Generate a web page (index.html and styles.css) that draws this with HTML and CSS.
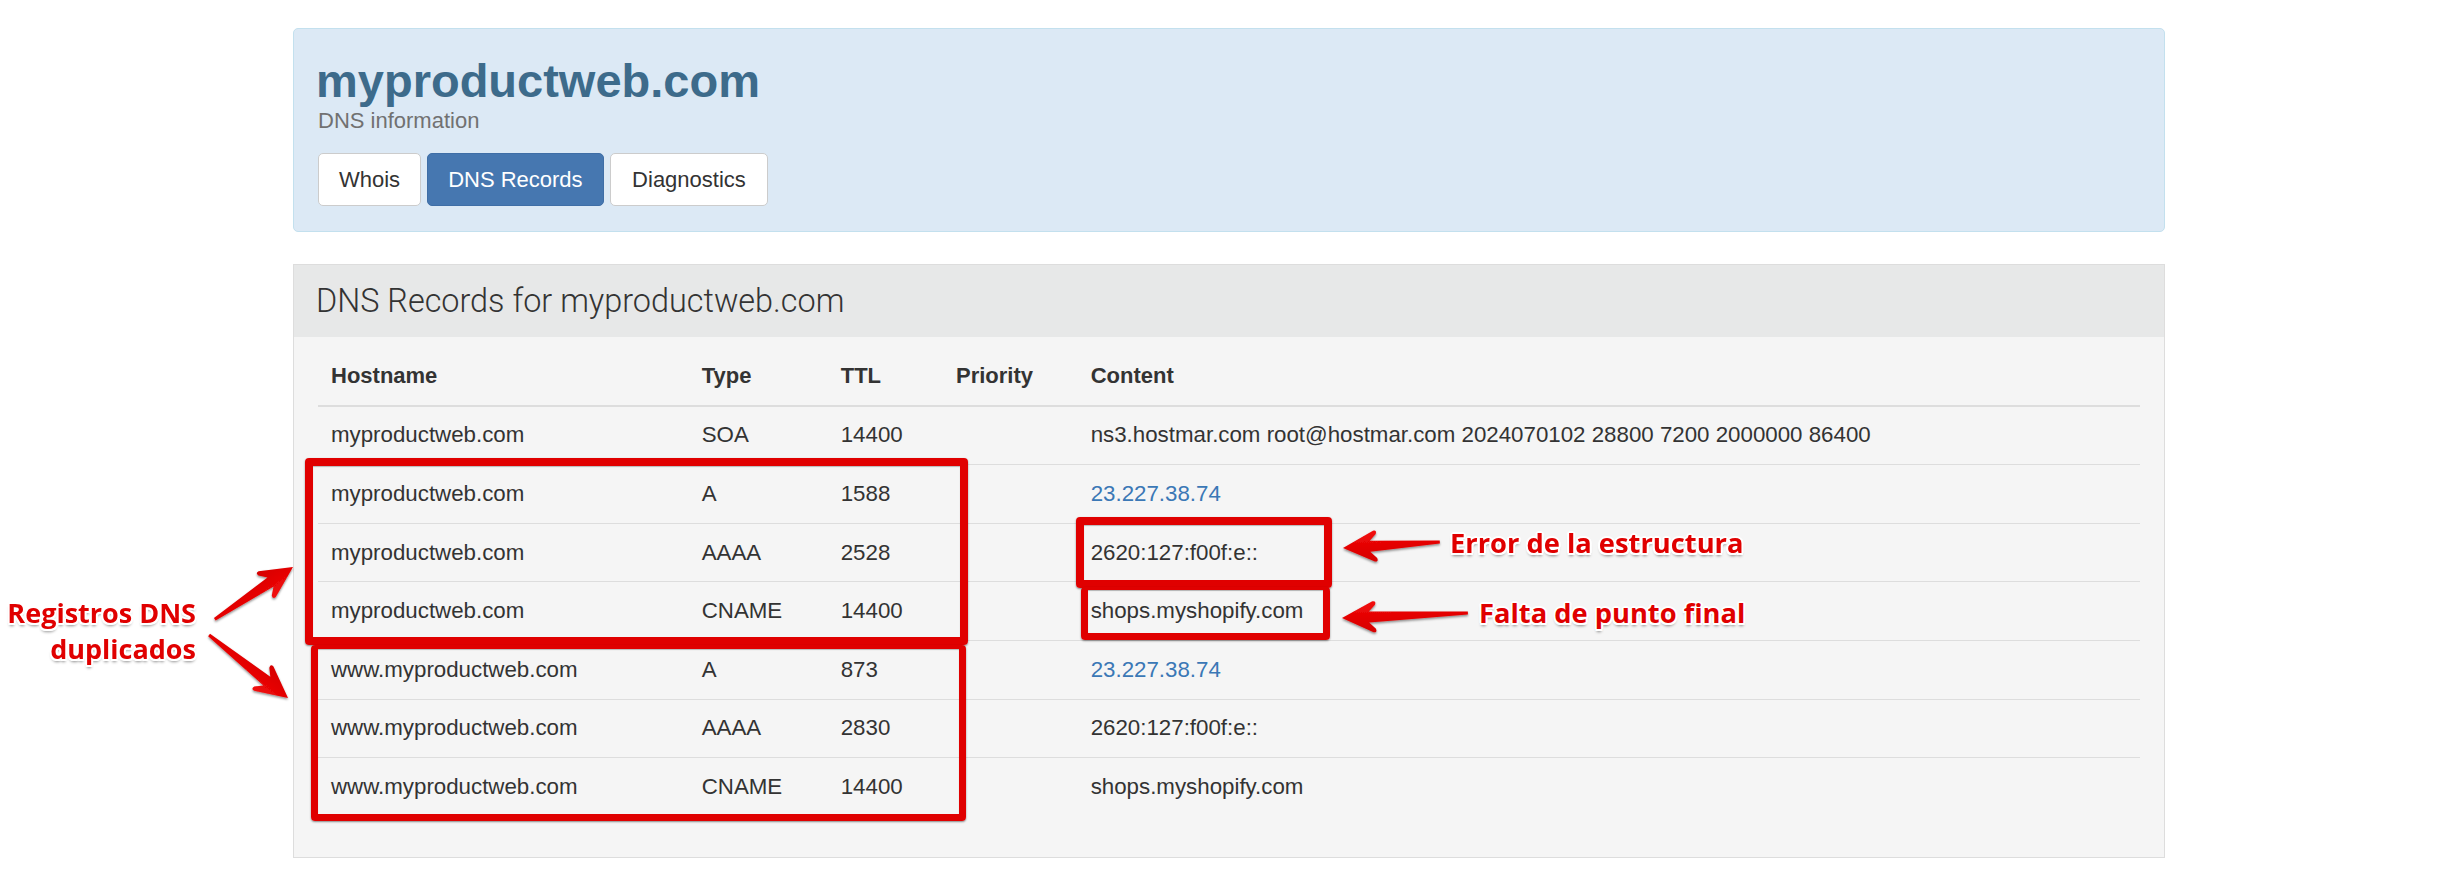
FILE: index.html
```html
<!DOCTYPE html>
<html lang="es">
<head>
<meta charset="utf-8">
<title>myproductweb.com - DNS Records</title>
<link rel="stylesheet" href="styles.css">
</head>
<body>
<div class="page">
  <div class="container">
    <div class="hero">
      <h1 class="hero-title">myproductweb.com</h1>
      <p class="hero-sub">DNS information</p>
      <div class="tabs">
        <a class="btn">Whois</a>
        <a class="btn btn-active">DNS Records</a>
        <a class="btn btn-wide">Diagnostics</a>
      </div>
    </div>

    <div class="panel">
      <div class="panel-heading">
        <h3 class="panel-title">DNS Records for myproductweb.com</h3>
      </div>
      <div class="panel-body">
        <table class="records">
          <colgroup>
            <col class="c-host"><col class="c-type"><col class="c-ttl"><col class="c-prio"><col class="c-content">
          </colgroup>
          <thead>
            <tr><th>Hostname</th><th>Type</th><th>TTL</th><th>Priority</th><th>Content</th></tr>
          </thead>
          <tbody>
            <tr><td>myproductweb.com</td><td>SOA</td><td>14400</td><td></td><td>ns3.hostmar.com root@hostmar.com 2024070102 28800 7200 2000000 86400</td></tr>
            <tr><td>myproductweb.com</td><td>A</td><td>1588</td><td></td><td><a class="link">23.227.38.74</a></td></tr>
            <tr><td>myproductweb.com</td><td>AAAA</td><td>2528</td><td></td><td>2620:127:f00f:e::</td></tr>
            <tr><td>myproductweb.com</td><td>CNAME</td><td>14400</td><td></td><td>shops.myshopify.com</td></tr>
            <tr><td>www.myproductweb.com</td><td>A</td><td>873</td><td></td><td><a class="link">23.227.38.74</a></td></tr>
            <tr><td>www.myproductweb.com</td><td>AAAA</td><td>2830</td><td></td><td>2620:127:f00f:e::</td></tr>
            <tr><td>www.myproductweb.com</td><td>CNAME</td><td>14400</td><td></td><td>shops.myshopify.com</td></tr>
          </tbody>
        </table>
      </div>
    </div>
  </div>

  <!-- annotation overlay -->
  <div class="mark mark-1"></div>
  <div class="mark mark-2"></div>
  <div class="mark mark-3"></div>
  <div class="mark mark-4"></div>

  <svg class="arrows" width="2448" height="878" viewBox="0 0 2448 878" xmlns="http://www.w3.org/2000/svg">
    <defs>
      <filter id="ash" x="-20%" y="-20%" width="140%" height="140%">
        <feDropShadow dx="0" dy="1.5" stdDeviation="1" flood-color="#000" flood-opacity="0.45"/>
      </filter>
      <linearGradient id="ared" x1="0" y1="0" x2="0" y2="1">
        <stop offset="0" stop-color="#f20a0a"/>
        <stop offset="1" stop-color="#d60000"/>
      </linearGradient>
    </defs>
    <g fill="url(#ared)" filter="url(#ash)">
      <path transform="translate(1343 548) rotate(-3.5)" d="M0,0 L31,-15.5 Q35,-16 33.5,-12 L27,-5.5 L97,-1.5 L97,1.5 L27,5.5 L33.5,12 Q35,16 31,15.5 Z"/>
      <path transform="translate(1342 618) rotate(-2.3)" d="M0,0 L31,-15.5 Q35,-16 33.5,-12 L27,-5.5 L126,-1.5 L126,1.5 L27,5.5 L33.5,12 Q35,16 31,15.5 Z"/>
      <path transform="translate(293 567) rotate(146.3)" d="M0,0 L31,-15.5 Q35,-16 33.5,-12 L27,-5.5 L94,-1.5 L94,1.5 L27,5.5 L33.5,12 Q35,16 31,15.5 Z"/>
      <path transform="translate(288 698) rotate(-141.4)" d="M0,0 L31,-15.5 Q35,-16 33.5,-12 L27,-5.5 L101,-1.5 L101,1.5 L27,5.5 L33.5,12 Q35,16 31,15.5 Z"/>
    </g>
  </svg>

  <div class="note note-left">Registros DNS<br>duplicados</div>
  <div class="note note-err">Error de la estructura</div>
  <div class="note note-dot">Falta de punto final</div>
</div>
</body>
</html>
```

FILE: styles.css
```css
* { box-sizing: border-box; }

html, body {
  margin: 0;
  padding: 0;
  background: #ffffff;
}

body {
  font-family: "Liberation Sans", Helvetica, Arial, sans-serif;
  font-size: 22px;
  line-height: 32px;
  color: #333333;
}

.page {
  position: relative;
  width: 2448px;
  height: 878px;
  overflow: hidden;
}

.container {
  width: 1872px;
  margin-left: 293px;
  padding-top: 28px;
}

/* ---------- header box ---------- */
.hero {
  height: 204px;
  background: #dce9f5;
  border: 1px solid #c3e0ee;
  border-radius: 5px;
  padding: 25.5px 24px 0 24px;
}

.hero-title {
  margin: 0 0 0 -2px;
  font-size: 47px;
  line-height: 52px;
  font-weight: 700;
  color: #3d6b8b;
}

.hero-sub {
  margin: 1px 0 0 0;
  font-size: 22px;
  line-height: 26px;
  color: #717171;
}

.tabs {
  display: flex;
  gap: 6px;
  margin-top: 19px;
}

.btn {
  display: block;
  height: 53px;
  padding: 0 20px;
  line-height: 51px;
  font-size: 22px;
  color: #333333;
  background: #ffffff;
  border: 1px solid #cccccc;
  border-radius: 5px;
}

.btn-wide {
  padding: 0 21.5px;
}

.btn-active {
  color: #ffffff;
  background: #4677b0;
  border-color: #3f6ea6;
}

/* ---------- panel ---------- */
.panel {
  margin-top: 32px;
  height: 594px;
  background: #f5f5f5;
  border: 1px solid #dddddd;
}

.panel-heading {
  height: 72px;
  background: #e7e8e8;
  padding: 19px 24px 0 22px;
}

.panel-title {
  margin: 0;
  font-family: "Roboto", "Liberation Sans", Helvetica, Arial, sans-serif;
  font-weight: 300;
  font-size: 32.4px;
  line-height: 35px;
  color: #333333;
}

.panel-body {
  padding: 10px 24px 40px 24px;
}

.records {
  width: 100%;
  table-layout: fixed;
  border-collapse: collapse;
  border-spacing: 0;
  font-size: 22.3px;
}

.c-host { width: 370.7px; }
.c-type { width: 139px; }
.c-ttl { width: 115.3px; }
.c-prio { width: 134.7px; }

.records th {
  text-align: left;
  font-weight: 700;
  font-size: 22px;
  padding: 12.8px 13px;
  vertical-align: bottom;
  border-bottom: 2px solid #dddddd;
  white-space: nowrap;
}

.records td {
  padding: 12.8px 13px;
  border-top: 1px solid #dddddd;
  vertical-align: top;
  white-space: nowrap;
}

.link {
  color: #3b78b6;
  text-decoration: none;
}

/* ---------- annotations (overlay) ---------- */
.mark {
  position: absolute;
  border: 8px solid #e00000;
  border-radius: 4px;
  box-shadow: 0 1px 2px rgba(0, 0, 0, 0.45), inset 0 1px 1px rgba(0, 0, 0, 0.25);
}

.mark-1 { left: 305px; top: 458px; width: 663px; height: 187px; }
.mark-2 { left: 311px; top: 645px; width: 655px; height: 176px; border-width: 4px 7px 7px 7px; }
.mark-3 { left: 1076px; top: 517px; width: 256px; height: 71px; }
.mark-4 { left: 1081px; top: 587px; width: 249px; height: 53px; border-width: 3px 7px 7px 7px; }

.arrows {
  position: absolute;
  left: 0;
  top: 0;
  pointer-events: none;
}

.note {
  position: absolute;
  font-family: "Open Sans", "Liberation Sans", sans-serif;
  font-weight: 700;
  color: #e00000;
  white-space: nowrap;
  text-shadow:
    -1.5px -1.5px 0 #fff, 1.5px -1.5px 0 #fff, -1.5px 1.5px 0 #fff, 1.5px 1.5px 0 #fff,
    0 -2px 0 #fff, 0 2px 0 #fff, -2px 0 0 #fff, 2px 0 0 #fff,
    0 3px 3px rgba(0, 0, 0, 0.45);
}

.note-left {
  left: 0;
  top: 595px;
  width: 196px;
  text-align: right;
  font-size: 27px;
  line-height: 36px;
}

.note-err {
  left: 1450px;
  top: 528.5px;
  font-size: 27.3px;
  line-height: 28px;
}

.note-dot {
  left: 1479px;
  top: 598.5px;
  font-size: 27.3px;
  line-height: 28px;
}
```
